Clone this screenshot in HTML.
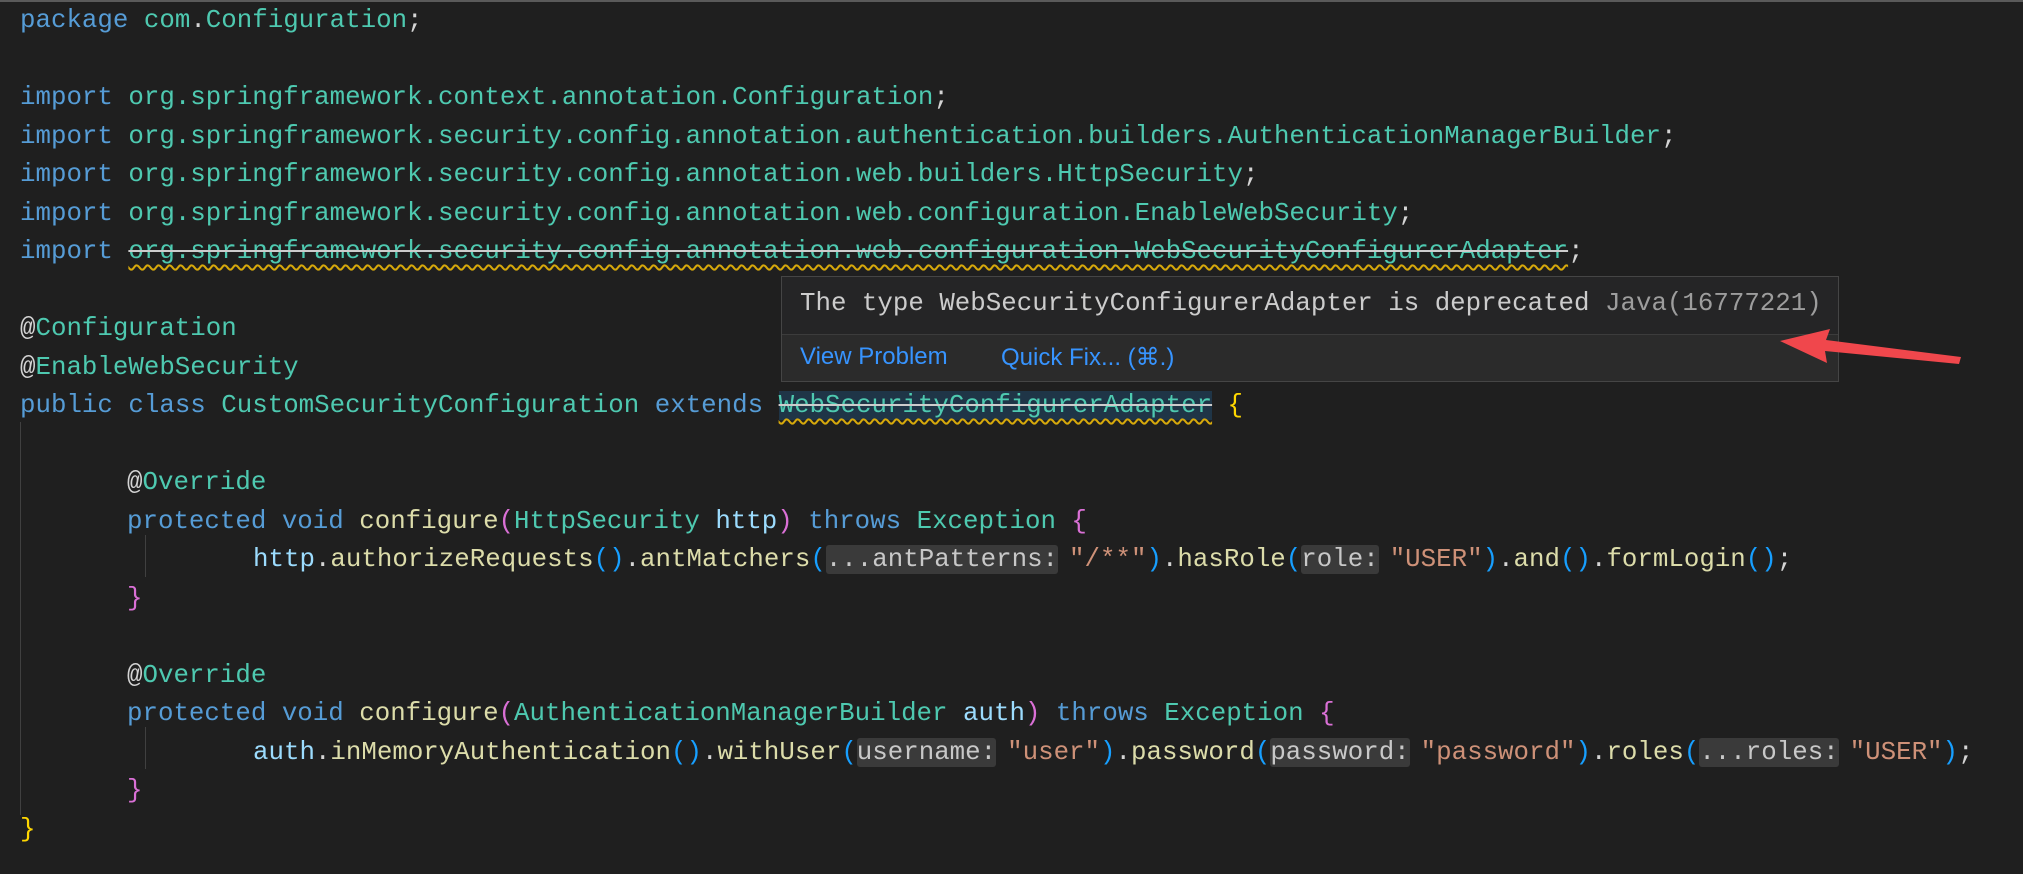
<!DOCTYPE html>
<html><head><meta charset="utf-8"><style>
html,body{margin:0;padding:0;background:#1f1f1f;width:2023px;height:874px;overflow:hidden;position:relative}
.code{position:absolute;left:0;top:2px;font-family:"Liberation Mono",monospace;font-size:25.8px;line-height:38.5px;color:#d4d4d4}
.l{height:38.5px;padding-left:20px;white-space:pre}
.k{color:#569cd6}.t{color:#4ec9b0}.m{color:#dcdcaa}.v{color:#9cdcfe}.s{color:#ce9178}
.b1{color:#ffd700}.b2{color:#da70d6}.b3{color:#179fff}
.h{background:#3a3a3a;color:#c8c8c8;border-radius:3px;margin-right:11px}
.sq{text-decoration:underline wavy #d7a90b;text-underline-offset:6px;text-decoration-thickness:2px}
.st{text-decoration:line-through #ccc}
.sel{background:#1f3547}
.guide{position:absolute;width:1px;background:#404040}
.tip{position:absolute;left:781px;top:276px;width:1058px;height:106px;background:#252526;border:1px solid #454545;box-sizing:border-box}
.tip .msg{position:absolute;left:18px;top:12px;font-family:"Liberation Mono",monospace;font-size:25.8px;color:#cccccc;white-space:pre}
.tip .sep{position:absolute;left:0;right:0;top:57px;height:1px;background:#3c3c3c}
.tip .bot{position:absolute;left:0;right:0;top:58px;bottom:0;background:#2b2b2b}
.tip .lk{position:absolute;top:66px;font-family:"Liberation Sans",sans-serif;font-size:24px;color:#3794ff;white-space:pre}
</style></head><body>
<div style="position:absolute;left:0;top:0;width:2023px;height:2px;background:#5a5a5a"></div>
<div class="guide" style="left:20px;top:422px;height:393px"></div>
<div class="guide" style="left:145px;top:535px;height:42px"></div>
<div class="guide" style="left:145px;top:727px;height:42px"></div>
<div class="code"><div class="l"><span class="k">package</span> <span class="t">com</span>.<span class="t">Configuration</span>;</div><div class="l"></div><div class="l"><span class="k">import</span> <span class="t">org.springframework.context.annotation.Configuration</span>;</div><div class="l"><span class="k">import</span> <span class="t">org.springframework.security.config.annotation.authentication.builders.AuthenticationManagerBuilder</span>;</div><div class="l"><span class="k">import</span> <span class="t">org.springframework.security.config.annotation.web.builders.HttpSecurity</span>;</div><div class="l"><span class="k">import</span> <span class="t">org.springframework.security.config.annotation.web.configuration.EnableWebSecurity</span>;</div><div class="l"><span class="k">import</span> <span class="sq"><span class="st t">org.springframework.security.config.annotation.web.configuration.WebSecurityConfigurerAdapter</span></span>;</div><div class="l"></div><div class="l">@<span class="t">Configuration</span></div><div class="l">@<span class="t">EnableWebSecurity</span></div><div class="l"><span class="k">public</span> <span class="k">class</span> <span class="t">CustomSecurityConfiguration</span> <span class="k">extends</span> <span class="sq sel"><span class="st t">WebSecurityConfigurerAdapter</span></span> <span class="b1">{</span></div><div class="l"></div><div class="l" style="padding-left:127px">@<span class="t">Override</span></div><div class="l" style="padding-left:127px"><span class="k">protected</span> <span class="k">void</span> <span class="m">configure</span><span class="b2">(</span><span class="t">HttpSecurity</span> <span class="v">http</span><span class="b2">)</span> <span class="k">throws</span> <span class="t">Exception</span> <span class="b2">{</span></div><div class="l" style="padding-left:253px"><span class="v">http</span>.<span class="m">authorizeRequests</span><span class="b3">()</span>.<span class="m">antMatchers</span><span class="b3">(</span><span class="h">...antPatterns:</span><span class="s">"/**"</span><span class="b3">)</span>.<span class="m">hasRole</span><span class="b3">(</span><span class="h">role:</span><span class="s">"USER"</span><span class="b3">)</span>.<span class="m">and</span><span class="b3">()</span>.<span class="m">formLogin</span><span class="b3">()</span>;</div><div class="l" style="padding-left:127px"><span class="b2">}</span></div><div class="l"></div><div class="l" style="padding-left:127px">@<span class="t">Override</span></div><div class="l" style="padding-left:127px"><span class="k">protected</span> <span class="k">void</span> <span class="m">configure</span><span class="b2">(</span><span class="t">AuthenticationManagerBuilder</span> <span class="v">auth</span><span class="b2">)</span> <span class="k">throws</span> <span class="t">Exception</span> <span class="b2">{</span></div><div class="l" style="padding-left:253px"><span class="v">auth</span>.<span class="m">inMemoryAuthentication</span><span class="b3">()</span>.<span class="m">withUser</span><span class="b3">(</span><span class="h">username:</span><span class="s">"user"</span><span class="b3">)</span>.<span class="m">password</span><span class="b3">(</span><span class="h">password:</span><span class="s">"password"</span><span class="b3">)</span>.<span class="m">roles</span><span class="b3">(</span><span class="h">...roles:</span><span class="s">"USER"</span><span class="b3">)</span>;</div><div class="l" style="padding-left:127px"><span class="b2">}</span></div><div class="l"><span class="b1">}</span></div></div>
<div class="tip">
<div class="bot"></div><div class="sep"></div>
<div class="msg">The type WebSecurityConfigurerAdapter is deprecated <span style="color:#9d9d9d">Java(16777221)</span></div>
<div class="lk" style="left:18px">View Problem</div>
<div class="lk" style="left:219px">Quick Fix... (⌘.)</div>
</div>
<svg style="position:absolute;left:0;top:0" width="2023" height="874">
<polygon points="1780,341 1830,329 1826,340 1961,357 1959,364 1825,351 1827,363" fill="#f0474c"/>
</svg>
</body></html>
